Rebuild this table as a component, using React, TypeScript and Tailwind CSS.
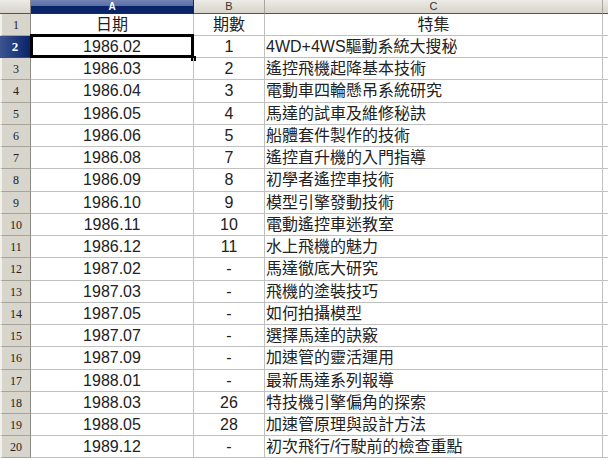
import React from 'react'

const ROWS: [string, string, string][] = [
  ['日期', '期數', '特集'],
  ['1986.02', '1', '4WD+4WS驅動系統大搜秘'],
  ['1986.03', '2', '遙控飛機起降基本技術'],
  ['1986.04', '3', '電動車四輪懸吊系統研究'],
  ['1986.05', '4', '馬達的試車及維修秘訣'],
  ['1986.06', '5', '船體套件製作的技術'],
  ['1986.08', '7', '遙控直升機的入門指導'],
  ['1986.09', '8', '初學者遙控車技術'],
  ['1986.10', '9', '模型引擎發動技術'],
  ['1986.11', '10', '電動遙控車迷教室'],
  ['1986.12', '11', '水上飛機的魅力'],
  ['1987.02', '-', '馬達徹底大研究'],
  ['1987.03', '-', '飛機的塗裝技巧'],
  ['1987.05', '-', '如何拍攝模型'],
  ['1987.07', '-', '選擇馬達的訣竅'],
  ['1987.09', '-', '加速管的靈活運用'],
  ['1988.01', '-', '最新馬達系列報導'],
  ['1988.03', '26', '特技機引擎偏角的探索'],
  ['1988.05', '28', '加速管原理與設計方法'],
  ['1989.12', '-', '初次飛行/行駛前的檢查重點'],
]

// row heights add up to 444px under the 14px column header
const HEIGHTS = [22, 22, 22, 23, 22, 22, 22, 23, 22, 22, 22, 23, 22, 22, 22, 23, 22, 22, 22, 22]

const cellFont = { fontFamily: '"Liberation Sans", "Noto Sans CJK TC", sans-serif' }

function ColHeader({ label, active }: { label: string; active?: boolean }) {
  if (active) {
    return (
      <div className="flex h-[14px] items-center justify-center border-r border-b border-[#1a2a55] bg-[linear-gradient(#7284b4_0%,#5a6ea6_45%,#0a246a_50%,#0a246a_100%)] text-[10px] font-bold leading-none text-white">
        {label}
      </div>
    )
  }
  return (
    <div className="flex h-[14px] items-center justify-center border-r border-b border-r-[#a8a59c] border-b-[#55544f] bg-[linear-gradient(#ecebe6,#d6d3ca)] text-[11px] leading-none text-[#333]">
      {label}
    </div>
  )
}

export default function App() {
  return (
    <div className="h-[460px] w-[608px] overflow-hidden bg-white" style={cellFont}>
      <div className="grid grid-cols-[31px_163px_71px_338px_5px]">
        <div className="h-[14px] border-r border-b border-r-[#8c8a84] border-b-[#55544f] bg-[linear-gradient(#ecebe6,#d6d3ca)]" />
        <ColHeader label="A" active />
        <ColHeader label="B" />
        <ColHeader label="C" />
        <div className="h-[14px] border-b border-b-[#55544f] bg-[linear-gradient(#ecebe6,#d6d3ca)]" />

        {ROWS.map((r, i) => {
          const h = HEIGHTS[i]
          const sel = i === 1
          return (
            <React.Fragment key={i}>
              <div
                style={{ height: h, fontFamily: '"Liberation Serif", serif' }}
                className={
                  sel
                    ? 'flex items-center justify-center border-r border-b border-r-[#0a1a40] border-b-[#3a4a78] bg-[linear-gradient(90deg,#3c5490,#0a246a)] text-[13px] font-bold text-white'
                    : 'flex items-center justify-center border-r border-b border-l-2 border-l-[#f2f1ec] border-r-[#8c8a84] border-b-[#a6a39b] bg-[#d8d5cc] text-[12px] text-[#222]'
                }
              >
                {i + 1}
              </div>
              <div
                style={{ height: h }}
                className="relative flex items-center justify-center border-r border-b border-[#c0c0c0] text-[16px] text-[#222]"
              >
                {r[0]}
                {sel && (
                  <>
                    <div className="absolute -top-[2px] -left-[1px] -right-[1px] -bottom-[1px] border-[3px] border-black" />
                    <div className="absolute -right-[3px] -bottom-[4px] h-[5px] w-[5px] bg-black" />
                  </>
                )}
              </div>
              <div
                style={{ height: h }}
                className="flex items-center justify-center border-r border-b border-[#c0c0c0] text-[16px] text-[#222]"
              >
                {r[1]}
              </div>
              <div
                style={{ height: h }}
                className={
                  'flex items-center border-r border-b border-[#c0c0c0] text-[16px] text-[#222] ' +
                  (i === 0 ? 'justify-center' : 'justify-start pl-[1px]')
                }
              >
                {r[2]}
              </div>
              <div style={{ height: h }} className="border-b border-[#c0c0c0]" />
            </React.Fragment>
          )
        })}
      </div>
    </div>
  )
}
